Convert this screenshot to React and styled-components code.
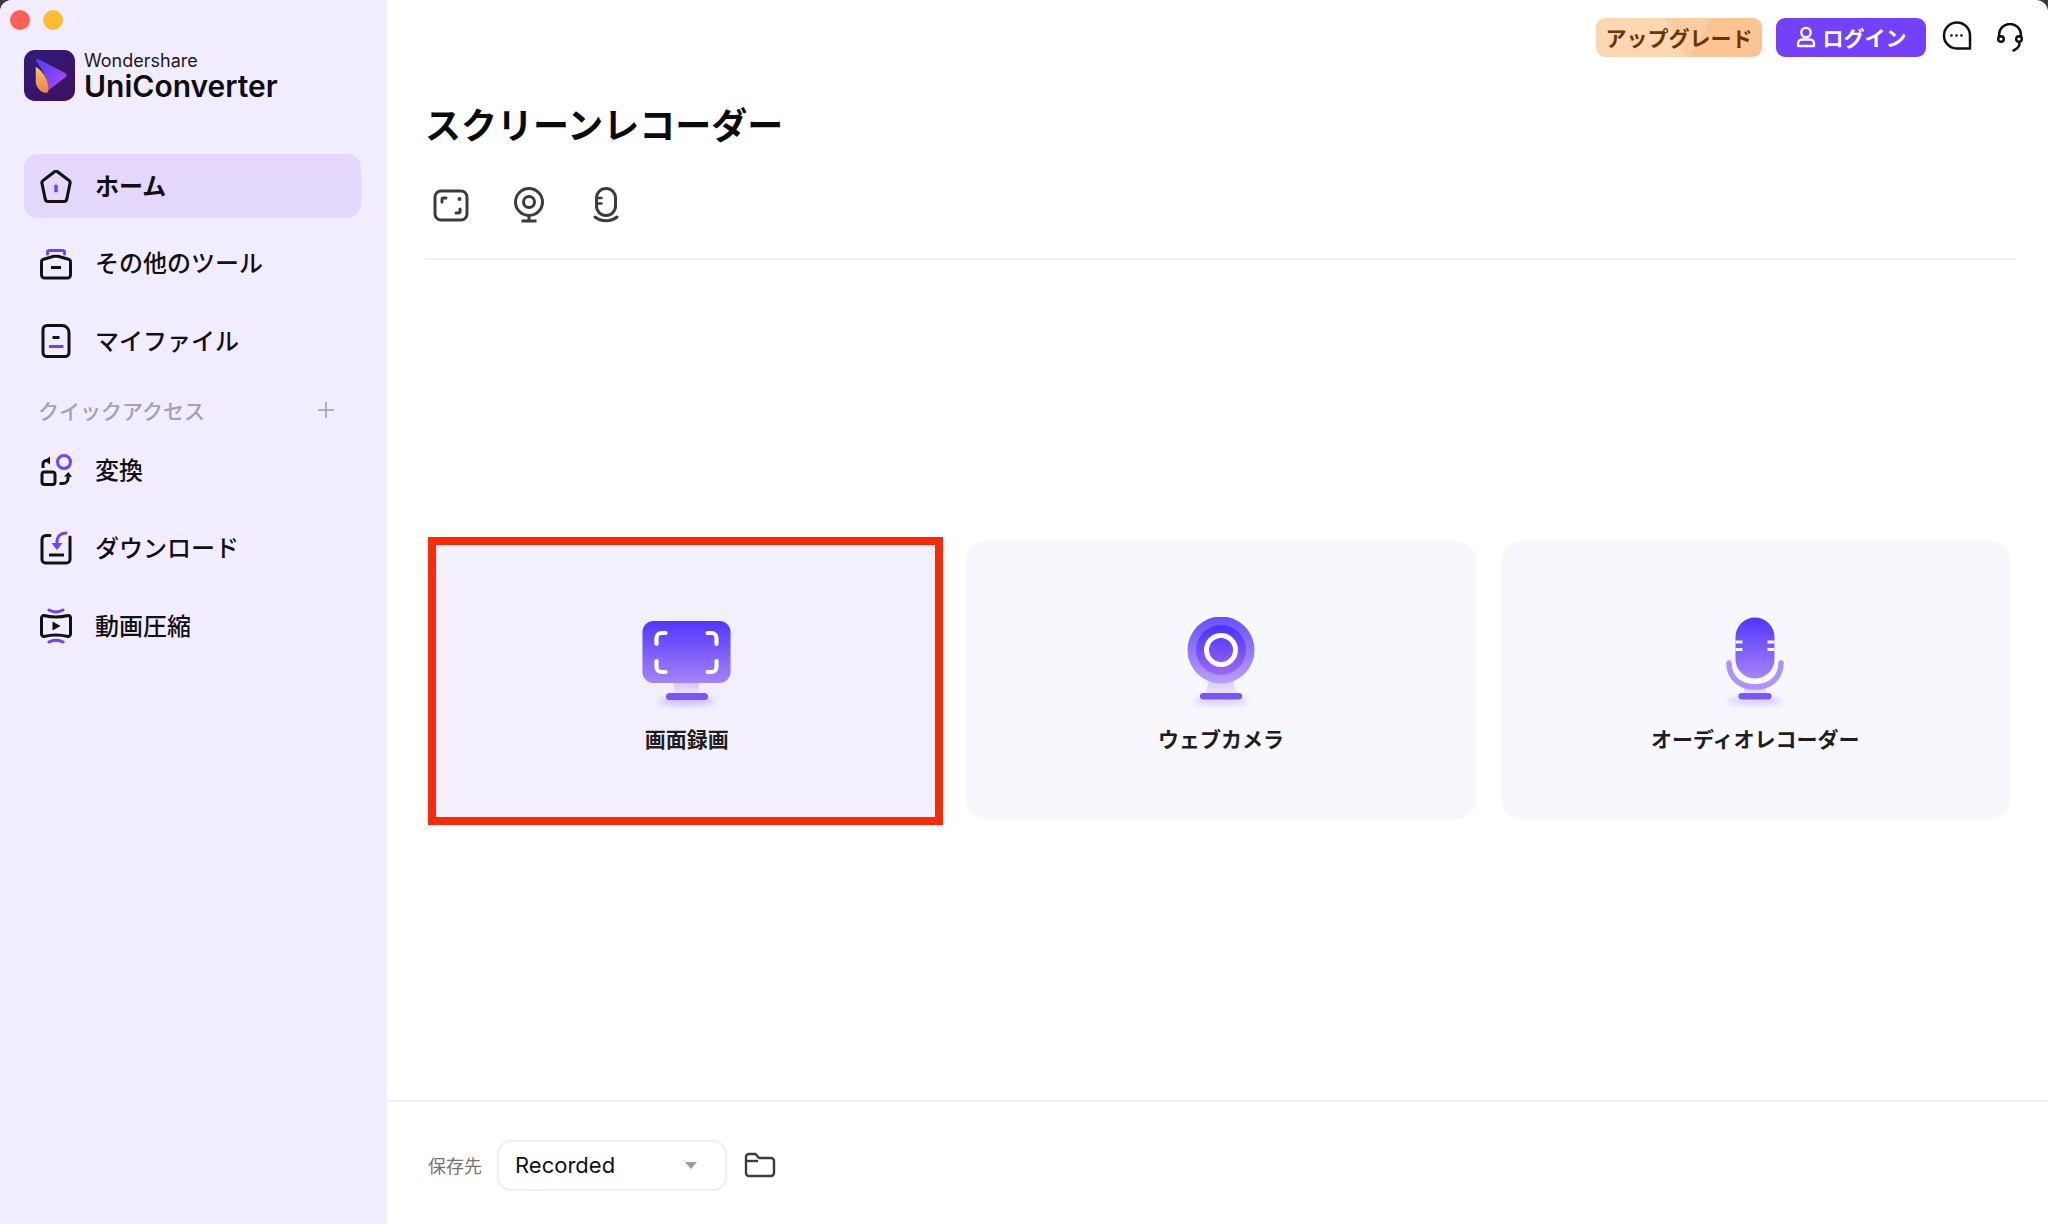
import React from 'react'
import styled, { createGlobalStyle } from 'styled-components';

const GlobalStyle = createGlobalStyle`
html, body {
  margin:0;
  padding:0;
  background:#3a3a3a;
}
body {
  font-family:Inter,"Noto Sans CJK JP",sans-serif;
  color:#111;
}
`;
const Window = styled.div`
width:2048px;
height:1224px;
display:flex;
overflow:hidden;
background:#fff;
border-radius:12px 12px 0 0;
`;
const Sidebar = styled.aside`
width:387px;
flex-shrink:0;
background:#f2edfe;
padding:10px 26px 0 24px;
box-sizing:border-box;
`;
const TrafficLights = styled.div`
display:flex;
gap:12.5px;
margin-left:-14px;
`;
const Light = styled.span`
width:20px;
height:20px;
border-radius:50%;
background:${p => p.$color};
`;
const LogoRow = styled.div`
display:flex;
align-items:flex-start;
gap:10px;
margin-top:20px;
height:51px;
`;
const LogoText = styled.div`
display:flex;
flex-direction:column;
margin-left:-1px;
padding-top:1px;
`;
const LogoTop = styled.span`
font-size:18px;
line-height:20px;
color:#1a1a1a;
`;
const LogoName = styled.span`
font-size:30px;
line-height:30px;
font-weight:600;
color:#0d0d12;
`;
const NavList = styled.nav`
display:flex;
flex-direction:column;
gap:13.7px;
margin-top:53px;
`;
const NavItem = styled.div`
height:64px;
display:flex;
align-items:center;
padding-left:16px;
border-radius:14px;
background:${p => p.$active ? '#e5d8fd' : 'transparent'};
font-size:24px;
font-weight:${p => p.$active ? 700 : 500};
color:#111;
`;
const NavIconSlot = styled.span`
width:32px;
display:flex;
justify-content:center;
margin-right:23px;
`;
const NavText = styled.span`
margin-bottom:4px;
`;
const SectionRow = styled.div`
height:38px;
box-sizing:border-box;
padding:8px 26px 0 14px;
display:flex;
align-items:center;
justify-content:space-between;
font-size:21px;
font-weight:500;
color:#a5a3ad;
`;
const Main = styled.main`
flex:1;
display:flex;
flex-direction:column;
min-width:0;
`;
const Header = styled.header`
height:75px;
box-sizing:border-box;
padding:18px 24px 0 0;
display:flex;
justify-content:flex-end;
align-items:flex-start;
`;
const UpgradeButton = styled.div`
width:166px;
height:39px;
box-sizing:border-box;
padding-bottom:2px;
display:flex;
align-items:center;
justify-content:center;
border-radius:9px;
font-size:21px;
font-weight:700;
color:#6a3508;
background:
  linear-gradient(118deg,transparent 0 62%,rgba(250,190,135,0.55) 62% 100%),
  linear-gradient(62deg,#fdd7b2 0 48%,#fccda1 48% 100%);
`;
const LoginButton = styled.div`
width:150px;
height:39px;
box-sizing:border-box;
padding-bottom:2px;
margin-left:14px;
display:flex;
align-items:center;
justify-content:center;
gap:7px;
border-radius:9px;
font-size:21px;
font-weight:700;
color:#fff;
background:#7340fb;
`;
const HeaderIcon = styled.span`
display:flex;
margin-left:${p => p.$gap}px;
margin-top:${p => p.$top}px;
`;
const Title = styled.h1`
margin:27px 0 0 38px;
font-size:36px;
line-height:48px;
font-weight:700;
color:#0b0b0b;
`;
const TabRow = styled.div`
display:flex;
gap:25.5px;
margin:35px 0 0 38px;
`;
const Tab = styled.span`
width:52px;
height:40px;
display:flex;
align-items:center;
justify-content:center;
`;
const Divider = styled.div`
height:2px;
background:#eff0f0;
margin:33px 32px 0 38px;
`;
const CardArea = styled.section`
flex:1;
display:flex;
align-items:center;
gap:25px;
padding:0 38px 0 45px;
`;
const Card = styled.div`
position:relative;
flex:1;
height:278px;
box-sizing:border-box;
padding-top:10px;
display:flex;
flex-direction:column;
align-items:center;
justify-content:center;
gap:17px;
border-radius:${p => p.$selected ? '0' : '20px'};
background:${p => p.$selected ? '#f3effc' : '#f8f7fd'};
`;
const RedFrame = styled.div`
position:absolute;
left:-4px;
right:-2px;
top:-4px;
bottom:-6px;
border:8px solid #fb2a06;
pointer-events:none;
`;
const CardLabel = styled.span`
font-size:21px;
line-height:28px;
font-weight:700;
color:#1d1d22;
`;
const Footer = styled.footer`
height:124px;
box-sizing:border-box;
border-top:2px solid #eff0f0;
display:flex;
align-items:center;
padding:4px 0 0 41px;
`;
const SaveLabel = styled.span`
font-size:18px;
color:#757575;
margin-right:15px;
`;
const SelectBox = styled.div`
width:230px;
height:51px;
box-sizing:border-box;
border:2px solid #f0f0f1;
border-radius:14px;
display:flex;
align-items:center;
justify-content:space-between;
padding:0 28px 0 16px;
font-size:22px;
color:#111;
`;
const Caret = styled.span`
width:0;
height:0;
border-left:6.5px solid transparent;
border-right:6.5px solid transparent;
border-top:7px solid #9b9b9b;
`;
const FolderSlot = styled.span`
display:flex;
margin-left:17px;
`;

const HomeIcon = () => (
    <svg width="32" height="33" viewBox="1.5 1.5 28 29" fill="none">
        <path d="M13.6 3.4a3 3 0 0 1 3.8 0l9.6 7.4a2.4 2.4 0 0 1 .8 2.6l-2.8 13.6a2.6 2.6 0 0 1-2.6 2.2H8.6A2.6 2.6 0 0 1 6 27L3.2 13.4A2.4 2.4 0 0 1 4 10.8z" stroke="#111" strokeWidth="2.7" strokeLinejoin="round"/>
        <path d="M15.5 14.5v6.5" stroke="#7340fb" strokeWidth="3"/>
    </svg>
);
const ToolboxIcon = () => (
    <svg width="32" height="32" viewBox="0 0 32 32" fill="none">
        <path d="M7.5 6V4.5a2 2 0 0 1 2-2h13a2 2 0 0 1 2 2V6" stroke="#7340fb" strokeWidth="3" strokeLinecap="round"/>
        <path d="M1.5 14a3 3 0 0 1 2-2.8l10.5-3h4l10.5 3a3 3 0 0 1 2 2.8v13a3 3 0 0 1-3 3h-23a3 3 0 0 1-3-3z" stroke="#111" strokeWidth="3" strokeLinejoin="round"/>
        <path d="M11 19.5h10" stroke="#111" strokeWidth="3"/>
    </svg>
);
const FileIcon = () => (
    <svg width="32" height="34" viewBox="0 0 32 34" fill="none">
        <path d="M7 1.5h15a7 7 0 0 1 7 7v20a4 4 0 0 1-4 4H7a4 4 0 0 1-4-4v-23a4 4 0 0 1 4-4z" stroke="#111" strokeWidth="3"/>
        <path d="M12.5 13.5h7" stroke="#111" strokeWidth="3"/>
        <path d="M9 22.5h14.5" stroke="#7340fb" strokeWidth="3"/>
    </svg>
);
const ConvertIcon = () => (
    <svg width="32" height="33" viewBox="0 0 32 33" fill="none">
        <circle cx="24" cy="8" r="6.5" stroke="#7340fb" strokeWidth="3"/>
        <rect x="2" y="18" width="13" height="12.5" rx="2.5" stroke="#111" strokeWidth="3"/>
        <path d="M3 14v-4a3.5 3.5 0 0 1 3.5-3.500H9" stroke="#111" strokeWidth="3"/>
        <path d="M10 2.500 4.500 6.500l5.500 4z" fill="#111"/>
        <path d="M19.500 29.500h3.500a5 5 0 0 0 5-5v-2" stroke="#111" strokeWidth="3"/>
        <path d="M24 22.500l4.500-4.500 3.500 5z" fill="#111"/>
    </svg>
);
const DownloadIcon = () => (
    <svg width="32" height="34" viewBox="0 0 32 34" fill="none">
        <path d="M10 4.500H6a4 4 0 0 0-4 4v20a3.500 3.500 0 0 0 3.500 3.500h21a3.500 3.500 0 0 0 3.500-3.500V6" stroke="#111" strokeWidth="3" strokeLinecap="round"/>
        <path d="M26 2c-5 0-9 3-9 9v4" stroke="#7340fb" strokeWidth="3" strokeLinecap="round"/>
        <path d="M11.500 12h11l-5.500 7z" fill="#7340fb"/>
        <path d="M9 24h15" stroke="#111" strokeWidth="3"/>
    </svg>
);
const CompressIcon = () => (
    <svg width="32" height="36" viewBox="0 0 32 36" fill="none">
        <path d="M9 2c4 2.500 10 2.500 14 0" stroke="#7340fb" strokeWidth="3" strokeLinecap="round"/>
        <path d="M9 34c4-2.500 10-2.500 14 0" stroke="#7340fb" strokeWidth="3" strokeLinecap="round"/>
        <path d="M4 7.500c8 2 16 2 24 0a2.500 2.500 0 0 1 2.500 2.500v16a2.500 2.500 0 0 1-2.500 2.500c-8-2-16-2-24 0A2.500 2.500 0 0 1 1.500 26V10A2.500 2.500 0 0 1 4 7.500z" stroke="#111" strokeWidth="3"/>
        <path d="M12.500 13.500l8 4.500-8 4.500z" fill="#111"/>
    </svg>
);
const LogoIcon = () => (
    <svg width="51" height="51" viewBox="0 0 52 52">
        <defs>
            <linearGradient id="logoBg" x1="0" y1="0" x2="1" y2="1">
                <stop offset="0" stopColor="#2e1c7a"/>
                <stop offset="1" stopColor="#3c1160"/>
            </linearGradient>
            <linearGradient id="logoPlay" x1="0" y1="0" x2="1" y2="1">
                <stop offset="0" stopColor="#4a3cf8"/>
                <stop offset="1" stopColor="#b44bf0"/>
            </linearGradient>
            <linearGradient id="logoLeaf" x1="0" y1="0" x2="0" y2="1">
                <stop offset="0" stopColor="#f9c56a"/>
                <stop offset="1" stopColor="#f0823c"/>
            </linearGradient>
        </defs>
        <rect width="52" height="52" rx="11" fill="url(#logoBg)"/>
        <path d="M12 11c0-1.500 1.500-2.500 3-1.500l27 14c2 1 2 3.500 0 4.500L25 41c-1-10-5-20-13-30z" fill="url(#logoPlay)"/>
        <path d="M12 17c8 5 13 14 13 24 0 2-2 3-4 2.500-5-1.500-9-6-9-11.500z" fill="url(#logoLeaf)"/>
    </svg>
);
const UserIcon = () => (
    <svg width="20" height="22" viewBox="0 0 20 22" fill="none">
        <circle cx="10" cy="6.500" r="4.700" stroke="#fff" strokeWidth="2.300"/>
        <path d="M2 20v-2.500a4 4 0 0 1 4-4h8a4 4 0 0 1 4 4V20z" stroke="#fff" strokeWidth="2.300" strokeLinejoin="round"/>
    </svg>
);
const ChatIcon = () => (
    <svg width="30" height="30" viewBox="0 0 30 30" fill="none">
        <path d="M28 27.500H14.500a13 13 0 1 1 13.500-13z" stroke="#111" strokeWidth="2.500" strokeLinejoin="round"/>
        <circle cx="9.500" cy="14.500" r="1.300" fill="#111"/>
        <circle cx="14.500" cy="14.500" r="1.300" fill="#111"/>
        <circle cx="19.500" cy="14.500" r="1.300" fill="#111"/>
    </svg>
);
const HeadsetIcon = () => (
    <svg width="28" height="30" viewBox="0 0 28 30" fill="none">
        <path d="M3 15v-3a11 11 0 0 1 22 0v3" stroke="#111" strokeWidth="2.500"/>
        <circle cx="5" cy="16" r="2.800" stroke="#111" strokeWidth="2.400"/>
        <circle cx="23" cy="16" r="2.800" stroke="#111" strokeWidth="2.400"/>
        <path d="M23.500 20c0 4-2.500 6-6 7.500" stroke="#111" strokeWidth="2.500" strokeLinecap="round"/>
    </svg>
);
const ScreenTabIcon = () => (
    <svg width="36" height="33" viewBox="0 0 36 33" fill="none">
        <rect x="2" y="2" width="32" height="29" rx="6" stroke="#3c3c3c" strokeWidth="3"/>
        <path d="M9 13v-2.500A1.500 1.500 0 0 1 10.500 9H13" stroke="#3c3c3c" strokeWidth="3" strokeLinecap="round"/>
        <path d="M27 20v2.500a1.500 1.500 0 0 1-1.500 1.500H23" stroke="#3c3c3c" strokeWidth="3" strokeLinecap="round"/>
        <circle cx="26.500" cy="10" r="2" fill="#3c3c3c"/>
    </svg>
);
const WebcamTabIcon = () => (
    <svg width="32" height="36" viewBox="0 0 32 36" fill="none">
        <circle cx="16" cy="15" r="13.500" stroke="#3c3c3c" strokeWidth="3"/>
        <circle cx="16" cy="15" r="5.500" stroke="#3c3c3c" strokeWidth="3"/>
        <path d="M16 28.500v5M8.500 34h15" stroke="#3c3c3c" strokeWidth="3"/>
    </svg>
);
const MicTabIcon = () => (
    <svg width="26" height="36" viewBox="0 0 26 36" fill="none">
        <rect x="3.500" y="1.500" width="19" height="27" rx="9.500" stroke="#3c3c3c" strokeWidth="3"/>
        <path d="M3.500 11h6M3.500 16.500h6" stroke="#3c3c3c" strokeWidth="2.600"/>
        <path d="M2 30c6 5 16 5 22 0" stroke="#3c3c3c" strokeWidth="3" strokeLinecap="round"/>
    </svg>
);
const FolderIcon = () => (
    <svg width="32" height="26" viewBox="0 0 32 26" fill="none">
        <path d="M2 5a3 3 0 0 1 3-3h6.500l3.500 4h12a3 3 0 0 1 3 3v12a3 3 0 0 1-3 3H5a3 3 0 0 1-3-3z" stroke="#3c3c3c" strokeWidth="2.400" strokeLinejoin="round"/>
        <path d="M2 9h12" stroke="#3c3c3c" strokeWidth="2.400"/>
    </svg>
);

const IconDefs = ({ id }) => (
    <defs>
        <linearGradient id={id + 'Main'} x1="0" y1="0" x2="0" y2="1">
            <stop offset="0" stopColor="#5236fb"/>
            <stop offset="1" stopColor="#a583f8"/>
        </linearGradient>
        <linearGradient id={id + 'Neck'} x1="0" y1="0" x2="0" y2="1">
            <stop offset="0" stopColor="#cfc2fb"/>
            <stop offset="1" stopColor="#ece7fd"/>
        </linearGradient>
        <filter id={id + 'Blur'} x="-30%" y="-100%" width="160%" height="300%">
            <feGaussianBlur stdDeviation="3"/>
        </filter>
    </defs>
);
const MonitorArt = () => (
    <svg width="100" height="92" viewBox="0 0 100 92" fill="none">
        <IconDefs id="mon"/>
        <ellipse cx="50" cy="84" rx="28" ry="4" fill="#c9b8fa" filter="url(#monBlur)"/>
        <rect x="37" y="64" width="25" height="13" fill="url(#monNeck)"/>
        <rect x="29" y="76" width="42" height="7" rx="3.500" fill="#7a55f8"/>
        <rect x="5.500" y="4" width="88" height="62" rx="11" fill="url(#monMain)"/>
        <g stroke="#fff" strokeWidth="4.200" strokeLinecap="round">
            <path d="M19.500 27v-6a5 5 0 0 1 5-5h4"/>
            <path d="M79.500 27v-6a5 5 0 0 0-5-5h-4"/>
            <path d="M19.500 44v6a5 5 0 0 0 5 5h4"/>
            <path d="M79.500 44v6a5 5 0 0 1-5 5h-4"/>
        </g>
    </svg>
);
const WebcamArt = () => (
    <svg width="100" height="92" viewBox="0 0 100 92" fill="none">
        <IconDefs id="cam"/>
        <defs>
            <linearGradient id="camOuter" x1="0" y1="0" x2="0" y2="1">
                <stop offset="0" stopColor="#6a4ef9"/>
                <stop offset="1" stopColor="#b9a0fb"/>
            </linearGradient>
            <linearGradient id="camInner" x1="0" y1="0" x2="0" y2="1">
                <stop offset="0" stopColor="#4b30fb"/>
                <stop offset="1" stopColor="#9d68f4"/>
            </linearGradient>
        </defs>
        <ellipse cx="50" cy="84" rx="28" ry="4" fill="#d8ccfb" filter="url(#camBlur)"/>
        <path d="M38 60h24c0 7 2 12 5 17H33c3-5 5-10 5-17z" fill="url(#camNeck)"/>
        <rect x="29" y="76" width="42" height="6.500" rx="3" fill="#7a55f8"/>
        <circle cx="50" cy="33" r="33.500" fill="url(#camOuter)"/>
        <circle cx="50" cy="33" r="25" fill="url(#camInner)"/>
        <circle cx="50" cy="33" r="14.500" stroke="#fff" strokeWidth="5"/>
    </svg>
);
const MicArt = () => (
    <svg width="100" height="92" viewBox="0 0 100 92" fill="none">
        <IconDefs id="mic"/>
        <ellipse cx="50" cy="84" rx="28" ry="4" fill="#d8ccfb" filter="url(#micBlur)"/>
        <rect x="39" y="68" width="22" height="9" fill="url(#micNeck)"/>
        <rect x="33.500" y="76" width="33" height="6.500" rx="3.200" fill="#7a55f8"/>
        <rect x="30.500" y="0.500" width="39" height="61" rx="19.500" fill="url(#micMain)"/>
        <path d="M30.500 25h7M62.500 25h7M30.500 32.500h7M62.500 32.500h7" stroke="#f8f7fd" strokeWidth="2.800"/>
        <path d="M24 46c0 15 11 24 26 24s26-9 26-24" stroke="#ad94f9" strokeWidth="5.500" strokeLinecap="round"/>
    </svg>
);

const App = () => {
    const topItems = [
        { name: "ホーム", icon: <HomeIcon/>, active: true },
        { name: "その他のツール", icon: <ToolboxIcon/> },
        { name: "マイファイル", icon: <FileIcon/> },
    ];
    const quickItems = [
        { name: "変換", icon: <ConvertIcon/> },
        { name: "ダウンロード", icon: <DownloadIcon/> },
        { name: "動画圧縮", icon: <CompressIcon/> },
    ];

    const renderItems = (items) => {
        return (
            items.map((item, index) => {
                return (
                    <NavItem key={index} $active={item.active}>
                        <NavIconSlot>{item.icon}</NavIconSlot>
                        <NavText>{item.name}</NavText>
                    </NavItem>
                )
            })
        )
    }

    return (
        <Window>
            <GlobalStyle />
            <Sidebar>
                <TrafficLights>
                    <Light $color="#fe5f57" />
                    <Light $color="#febc2e" />
                </TrafficLights>
                <LogoRow>
                    <LogoIcon />
                    <LogoText>
                        <LogoTop>Wondershare</LogoTop>
                        <LogoName>UniConverter</LogoName>
                    </LogoText>
                </LogoRow>
                <NavList>
                    {renderItems(topItems)}
                    <SectionRow>
                        クイックアクセス
                        <svg width="18" height="18" viewBox="0 0 18 18" fill="none">
                            <path d="M9 1v16M1 9h16" stroke="#a0a0a8" strokeWidth="1.600"/>
                        </svg>
                    </SectionRow>
                    {renderItems(quickItems)}
                </NavList>
            </Sidebar>
            <Main>
                <Header>
                    <UpgradeButton>アップグレード</UpgradeButton>
                    <LoginButton><UserIcon />ログイン</LoginButton>
                    <HeaderIcon $gap={16} $top={3}><ChatIcon /></HeaderIcon>
                    <HeaderIcon $gap={24} $top={5}><HeadsetIcon /></HeaderIcon>
                </Header>
                <Title>スクリーンレコーダー</Title>
                <TabRow>
                    <Tab><ScreenTabIcon /></Tab>
                    <Tab><WebcamTabIcon /></Tab>
                    <Tab><MicTabIcon /></Tab>
                </TabRow>
                <Divider />
                <CardArea>
                    <Card $selected>
                        <MonitorArt />
                        <CardLabel>画面録画</CardLabel>
                        <RedFrame />
                    </Card>
                    <Card>
                        <WebcamArt />
                        <CardLabel>ウェブカメラ</CardLabel>
                    </Card>
                    <Card>
                        <MicArt />
                        <CardLabel>オーディオレコーダー</CardLabel>
                    </Card>
                </CardArea>
                <Footer>
                    <SaveLabel>保存先</SaveLabel>
                    <SelectBox>Recorded<Caret /></SelectBox>
                    <FolderSlot><FolderIcon /></FolderSlot>
                </Footer>
            </Main>
        </Window>
    )
}

export default App;
